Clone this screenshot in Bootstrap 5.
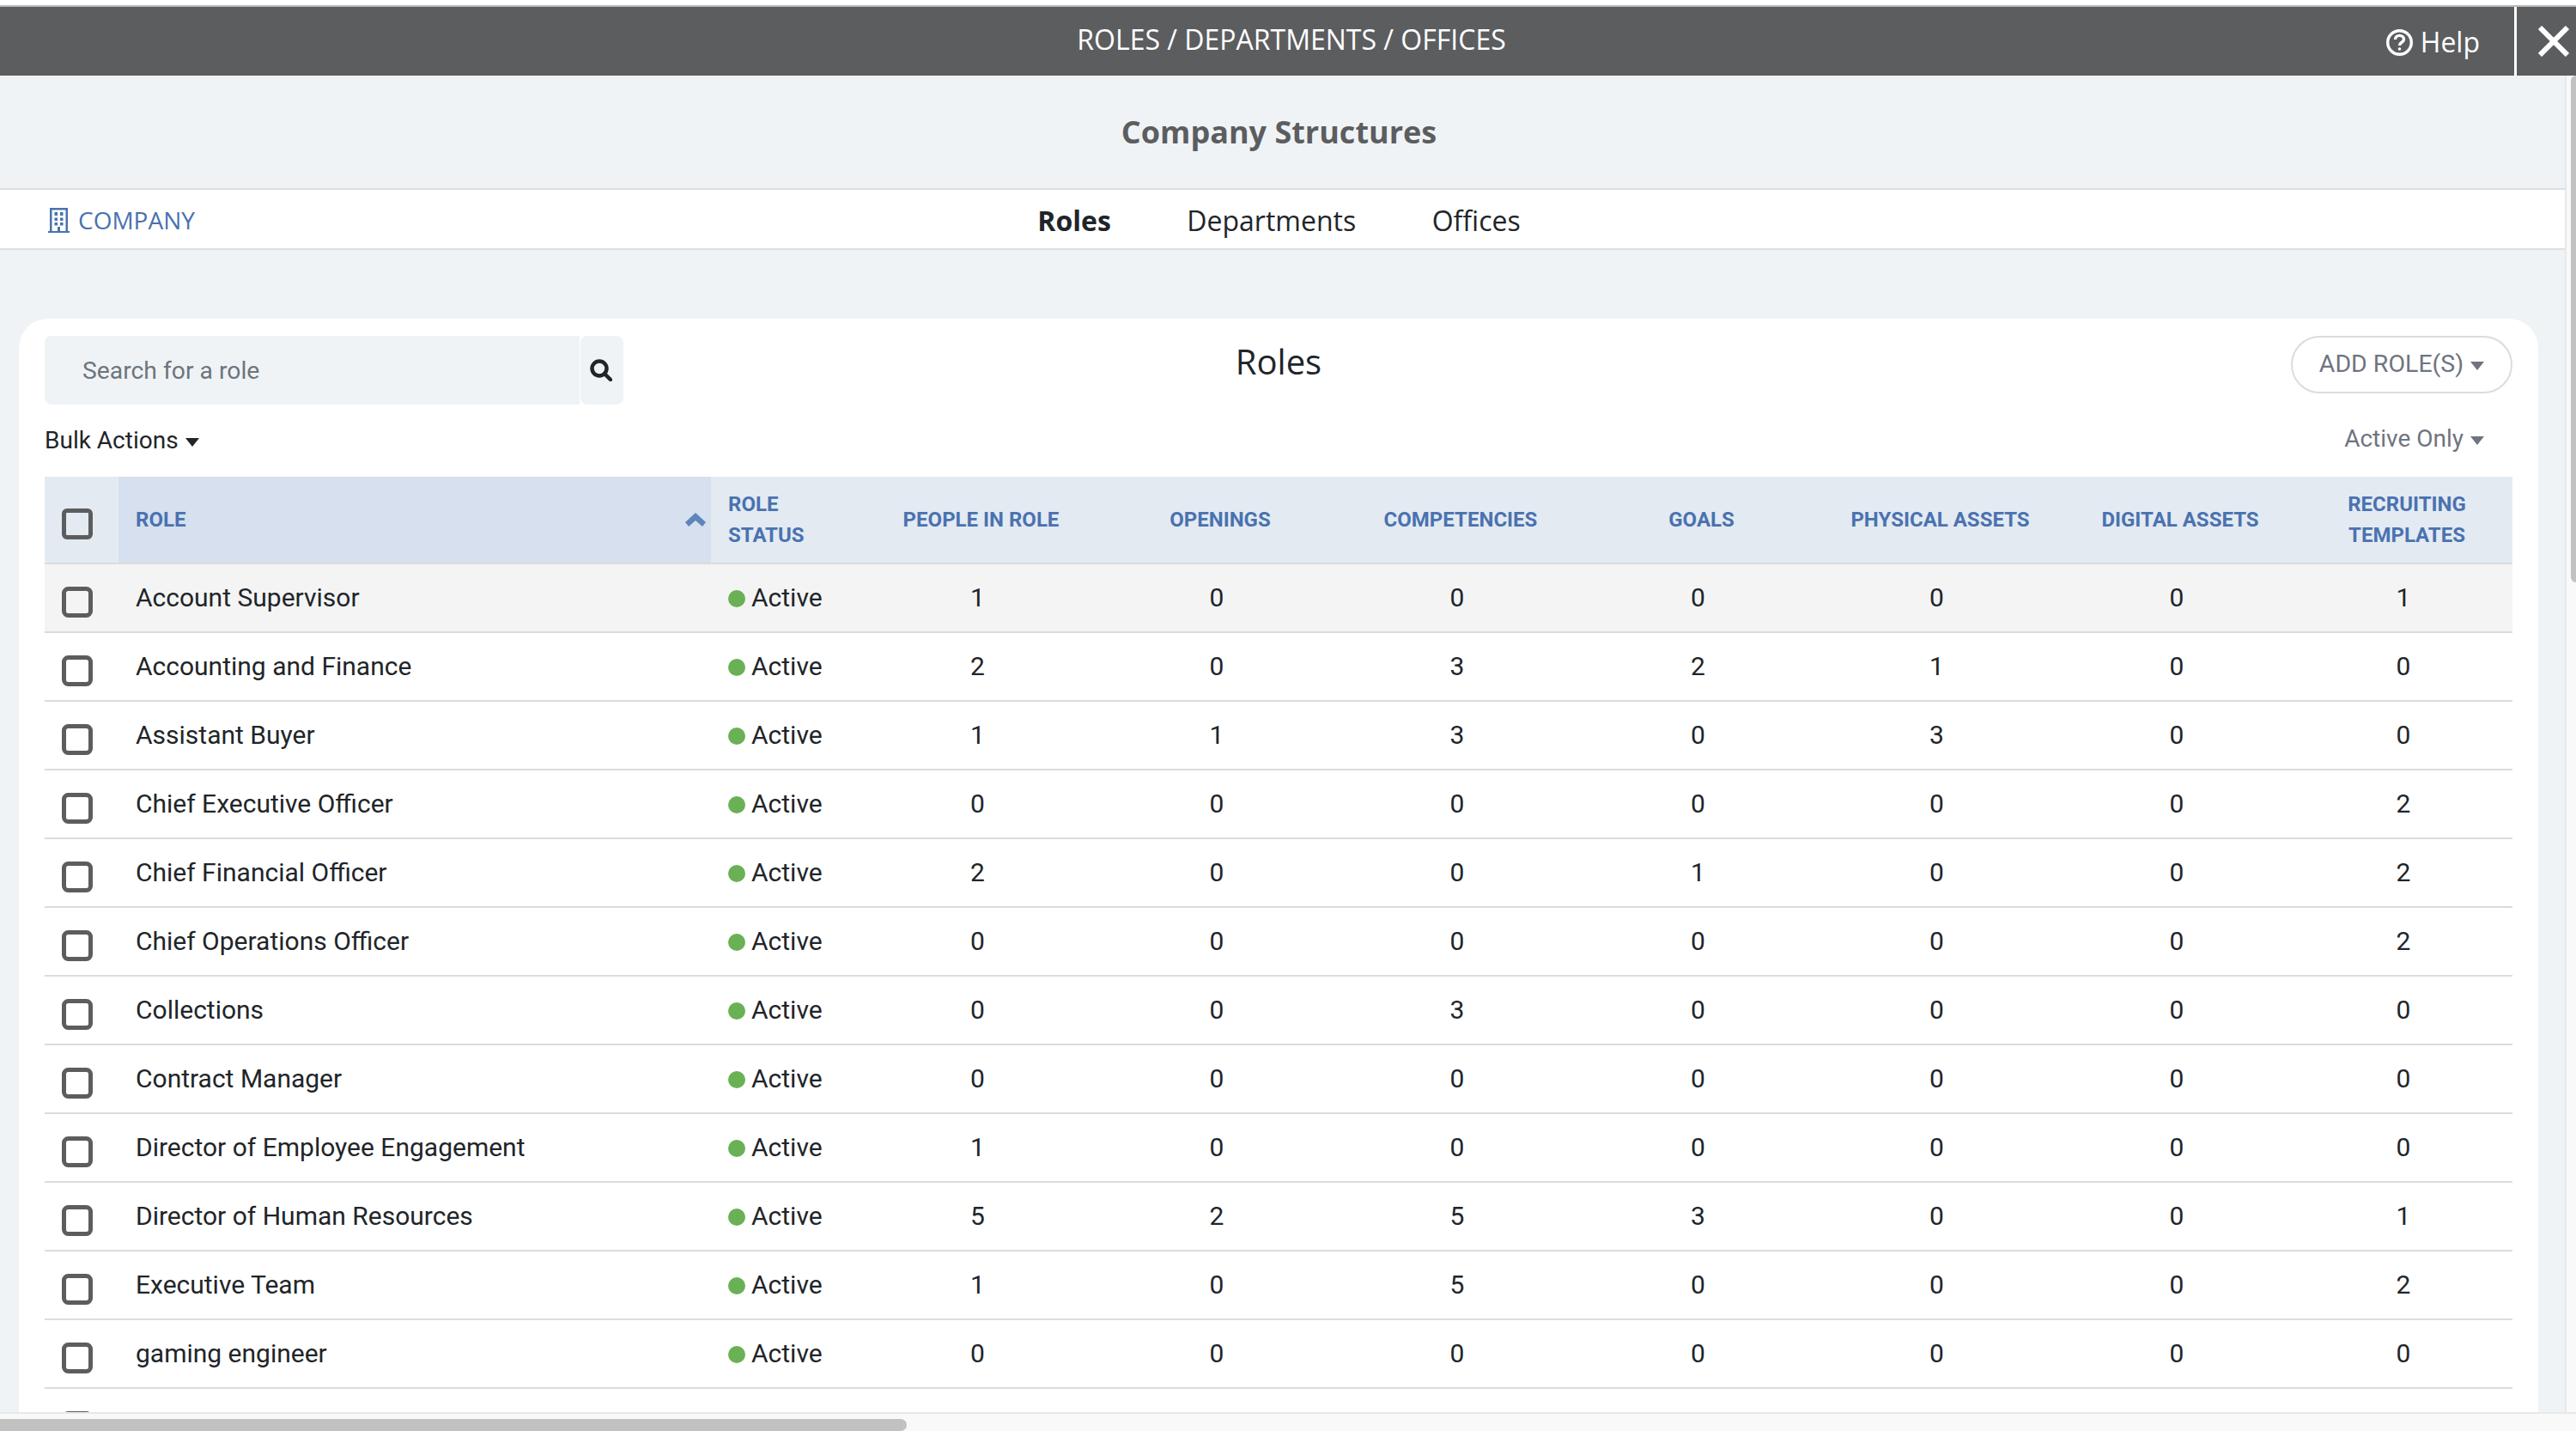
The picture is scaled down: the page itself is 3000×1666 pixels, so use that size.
<!DOCTYPE html>
<html lang="en">
<head>
<meta charset="utf-8">
<title>Roles / Departments / Offices</title>
<link href="https://cdn.jsdelivr.net/npm/bootstrap@5.3.0/dist/css/bootstrap.min.css" rel="stylesheet">
<script src="https://cdn.jsdelivr.net/npm/bootstrap@5.3.0/dist/js/bootstrap.bundle.min.js"></script>
<style>
html,body{height:100%;margin:0;overflow:hidden;background:#fff}
body{font-family:Roboto,"Liberation Sans",sans-serif;color:#212529}
.shell{height:1666px;width:3000px;padding-top:6px}
.topbar{height:82px;border-top:2px solid #b9b9b9;background:#5c5d5f;color:#fff;font-family:"Open Sans",sans-serif;display:grid;grid-template-columns:1fr auto 1fr;padding-left:8px}
.top-title{font-size:32px;line-height:1;margin-top:22px;font-weight:400}
.top-help{font-size:32px;line-height:1;margin-right:40px;gap:9px;padding-top:2px}
.top-close{width:72px;border-left:3px solid #fff;padding-left:25px}
.mid{height:1556px;overflow:hidden}
.mainpane{width:2987px;background:#eff3f6;overflow:hidden}
.vbar{width:13px;background:#f9f9f9;border-left:2px solid #e6e8ea;display:flex;justify-content:flex-end}
.vthumb{width:6px;height:590px;background:#c1c1c1;border-radius:8px 0 0 8px}
.hbar{height:22px;background:#f9f9f9;border-top:2px solid #e8e8e8;padding-top:6px}
.hthumb{width:1056px;height:14px;background:#c1c1c1;border-radius:0 8px 8px 0}
.page-head{height:131px;padding-right:8px;color:#5c5d5f;font-family:"Open Sans",sans-serif;font-size:36px;font-weight:700}
.tabbar{height:72px;background:#fff;border-top:2px solid #dcdee0;border-bottom:2px solid #dcdee0;display:grid;grid-template-columns:1fr auto 1fr;padding-right:8px;font-family:"Open Sans",sans-serif}
.co-link{color:#4a72b0;font-size:28px;padding-left:56px;padding-top:2px;gap:10px;text-decoration:none}
.tabset{gap:88.500px;font-size:32px;padding-top:4px}
.tabset .nav-link{padding:0;color:#212529}
.tabset .nav-link.active{font-weight:700;color:#212529}
.sheet{margin:80px 31px 0 22px;background:#fff;border:0;border-radius:34px 34px 0 0;padding:20px 30px 0}
.sheet-top{display:grid;grid-template-columns:1fr auto 1fr;align-items:start}
.searchbox{width:674px;height:80px}
.searchbox .form-control{background:#eff3f6;border:0;border-radius:8px;height:80px;padding:0 44px;font-size:28.300px;color:#212529;margin-right:1px}
.searchbox .form-control::placeholder{color:#6c757d}
.searchbox .input-group-text{background:#eff3f6;border:0;border-radius:8px!important;width:50px;padding:0 0 0 11px;margin-left:0!important}
.sheet-title{font-family:"Open Sans",sans-serif;font-size:40px;line-height:60px;margin:0;font-weight:400}
.addbtn{border:2px solid #dcdcdc;border-radius:34px;height:67px;width:258px;color:#6f7480;font-size:28.500px;padding:0;background:#fff}
.toolrow{height:84px}
.caret-down{display:inline-block;width:0;height:0;border-left:8px solid transparent;border-right:8px solid transparent;border-top:10px solid currentColor;margin-left:8px;vertical-align:middle}
.bulk{font-size:28px;color:#212529;padding:0;border:0}
.filter{font-size:28px;color:#6f7480;padding:0 33px 4px 0;border:0}
.roles-table{table-layout:fixed;width:2874px;margin:0;--bs-table-bg:transparent;--bs-table-border-color:#dcdcdc;font-size:30px}
.roles-table>thead>tr>th{--bs-table-bg:#e3eaf2;height:101px;padding:0 20px;vertical-align:middle;border-bottom-width:2px;color:#4a72b0;font-size:24px;line-height:36px;font-weight:700;text-transform:uppercase}
.roles-table>thead>tr>th.sorted{--bs-table-bg:#d6e0ee;position:relative}
.roles-table>tbody>tr>td{height:80px;padding:0 20px 1px;vertical-align:middle;border-bottom-width:2px}
.roles-table>tbody>tr.hovered>td{--bs-table-bg:#f4f4f4}
.roles-table>thead>tr>th.num{text-align:center;padding:0}
.roles-table>tbody>tr>td.num{text-align:center;padding:0 8px 1px 0}
.roles-table>thead>tr>th.pick,.roles-table>tbody>tr>td.pick{padding:0 0 0 20px}
.c-pick{width:86px}.c-role{width:690px}.c-status{width:175px}.c-a{width:279px}.c-b{width:278px}.c-c{width:282px}.c-d{width:279px}.c-e{width:277px}.c-f{width:282px}.c-g{width:246px}
.tick{width:36px;height:36px;margin:9px 0 0;display:block;border:5px solid #5c5d5f;border-radius:4px;background:transparent;float:none}
.sort-mark{position:absolute;right:6px;top:42px}
.live-dot{display:inline-block;width:20px;height:20px;border-radius:50%;background:#6ab155;margin-right:7px;vertical-align:-1px}
</style>
</head>
<body>
<div class="shell d-flex flex-column">
  <header class="topbar flex-shrink-0">
    <div></div>
    <div class="top-title">ROLES / DEPARTMENTS / OFFICES</div>
    <div class="d-flex justify-content-end align-items-center">
      <div class="top-help d-flex align-items-center">
        <svg width="31" height="31" viewBox="0 0 31 31" fill="none" stroke="#fff" stroke-width="3.400" aria-hidden="true"><circle cx="15.5" cy="15.5" r="13.800"/><path d="M10.500 12c0-3 2.200-4.600 5-4.600s5 1.700 5 4.200c0 2-1.200 3-2.700 3.900-1.400.9-2.300 1.600-2.300 3.500"/><circle cx="15.5" cy="23" r="1.100" fill="#fff" stroke-width="1.400"/></svg>
        <span>Help</span>
      </div>
      <div class="top-close align-self-stretch d-flex align-items-center">
        <svg width="36" height="36" viewBox="0 0 36 36" fill="none" stroke="#fff" stroke-width="6" aria-hidden="true"><path d="M2 2 34 34M34 2 2 34"/></svg>
      </div>
    </div>
  </header>
  <div class="mid d-flex flex-shrink-0">
    <main class="mainpane flex-shrink-0">
      <div class="page-head d-flex align-items-center justify-content-center">Company Structures</div>
      <div class="tabbar">
        <a class="co-link d-flex align-items-center" href="#">
          <svg width="25" height="29" viewBox="0 0 25 29" fill="#4a72b0" aria-hidden="true"><path fill-rule="evenodd" d="M2 0h21v27h2v2H0v-2h2zM4.500 2.500V27h16V2.500z"/><path d="M7.500 5h3.500v4H7.500zM14 5h3.500v4H14zM7.500 11.500h3.500v3.500H7.500zM14 11.500h3.500v3.500H14zM7.500 17h3.500v3.500H7.500zM14 17h3.500v3.500H14zM11 22h3v5h-3z"/></svg>
          COMPANY
        </a>
        <ul class="nav tabset align-items-center">
          <li class="nav-item"><a class="nav-link active" href="#">Roles</a></li>
          <li class="nav-item"><a class="nav-link" href="#">Departments</a></li>
          <li class="nav-item"><a class="nav-link" href="#">Offices</a></li>
        </ul>
        <div></div>
      </div>
      <section class="card sheet">
        <div class="sheet-top">
          <div class="input-group searchbox">
            <input class="form-control" type="text" placeholder="Search for a role" aria-label="Search for a role">
            <span class="input-group-text">
              <svg width="26" height="26" viewBox="0 0 26 26" fill="none" stroke="#212529" stroke-width="4.500" aria-hidden="true"><circle cx="11" cy="11" r="8.500"/><path d="M17 17l7 7" stroke-linecap="round"/></svg>
            </span>
          </div>
          <h2 class="sheet-title">Roles</h2>
          <div class="d-flex justify-content-end"><button class="btn addbtn" type="button">ADD ROLE(S)<span class="caret-down"></span></button></div>
        </div>
        <div class="toolrow d-flex justify-content-between align-items-center">
          <button class="btn bulk" type="button">Bulk Actions<span class="caret-down"></span></button>
          <button class="btn filter" type="button">Active Only<span class="caret-down"></span></button>
        </div>
        <table class="table roles-table">
          <colgroup><col class="c-pick"><col class="c-role"><col class="c-status"><col class="c-a"><col class="c-b"><col class="c-c"><col class="c-d"><col class="c-e"><col class="c-f"><col class="c-g"></colgroup>
          <thead>
            <tr>
              <th class="pick"><input class="form-check-input tick" type="checkbox" aria-label="Select all"></th>
              <th class="sorted">Role<svg class="sort-mark" width="24" height="16" viewBox="0 0 24 16" fill="#5f85bd" aria-hidden="true"><path d="M12 0 24 11l-4 5-8-7-8 7-4-5z"/></svg></th>
              <th>Role Status</th>
              <th class="num">People in Role</th>
              <th class="num">Openings</th>
              <th class="num">Competencies</th>
              <th class="num">Goals</th>
              <th class="num">Physical Assets</th>
              <th class="num">Digital Assets</th>
              <th class="num">Recruiting Templates</th>
            </tr>
          </thead>
          <tbody>
            <tr class="hovered"><td class="pick"><input class="form-check-input tick" type="checkbox"></td><td>Account Supervisor</td><td><span class="live-dot"></span>Active</td><td class="num">1</td><td class="num">0</td><td class="num">0</td><td class="num">0</td><td class="num">0</td><td class="num">0</td><td class="num">1</td></tr>
            <tr><td class="pick"><input class="form-check-input tick" type="checkbox"></td><td>Accounting and Finance</td><td><span class="live-dot"></span>Active</td><td class="num">2</td><td class="num">0</td><td class="num">3</td><td class="num">2</td><td class="num">1</td><td class="num">0</td><td class="num">0</td></tr>
            <tr><td class="pick"><input class="form-check-input tick" type="checkbox"></td><td>Assistant Buyer</td><td><span class="live-dot"></span>Active</td><td class="num">1</td><td class="num">1</td><td class="num">3</td><td class="num">0</td><td class="num">3</td><td class="num">0</td><td class="num">0</td></tr>
            <tr><td class="pick"><input class="form-check-input tick" type="checkbox"></td><td>Chief Executive Officer</td><td><span class="live-dot"></span>Active</td><td class="num">0</td><td class="num">0</td><td class="num">0</td><td class="num">0</td><td class="num">0</td><td class="num">0</td><td class="num">2</td></tr>
            <tr><td class="pick"><input class="form-check-input tick" type="checkbox"></td><td>Chief Financial Officer</td><td><span class="live-dot"></span>Active</td><td class="num">2</td><td class="num">0</td><td class="num">0</td><td class="num">1</td><td class="num">0</td><td class="num">0</td><td class="num">2</td></tr>
            <tr><td class="pick"><input class="form-check-input tick" type="checkbox"></td><td>Chief Operations Officer</td><td><span class="live-dot"></span>Active</td><td class="num">0</td><td class="num">0</td><td class="num">0</td><td class="num">0</td><td class="num">0</td><td class="num">0</td><td class="num">2</td></tr>
            <tr><td class="pick"><input class="form-check-input tick" type="checkbox"></td><td>Collections</td><td><span class="live-dot"></span>Active</td><td class="num">0</td><td class="num">0</td><td class="num">3</td><td class="num">0</td><td class="num">0</td><td class="num">0</td><td class="num">0</td></tr>
            <tr><td class="pick"><input class="form-check-input tick" type="checkbox"></td><td>Contract Manager</td><td><span class="live-dot"></span>Active</td><td class="num">0</td><td class="num">0</td><td class="num">0</td><td class="num">0</td><td class="num">0</td><td class="num">0</td><td class="num">0</td></tr>
            <tr><td class="pick"><input class="form-check-input tick" type="checkbox"></td><td>Director of Employee Engagement</td><td><span class="live-dot"></span>Active</td><td class="num">1</td><td class="num">0</td><td class="num">0</td><td class="num">0</td><td class="num">0</td><td class="num">0</td><td class="num">0</td></tr>
            <tr><td class="pick"><input class="form-check-input tick" type="checkbox"></td><td>Director of Human Resources</td><td><span class="live-dot"></span>Active</td><td class="num">5</td><td class="num">2</td><td class="num">5</td><td class="num">3</td><td class="num">0</td><td class="num">0</td><td class="num">1</td></tr>
            <tr><td class="pick"><input class="form-check-input tick" type="checkbox"></td><td>Executive Team</td><td><span class="live-dot"></span>Active</td><td class="num">1</td><td class="num">0</td><td class="num">5</td><td class="num">0</td><td class="num">0</td><td class="num">0</td><td class="num">2</td></tr>
            <tr><td class="pick"><input class="form-check-input tick" type="checkbox"></td><td>gaming engineer</td><td><span class="live-dot"></span>Active</td><td class="num">0</td><td class="num">0</td><td class="num">0</td><td class="num">0</td><td class="num">0</td><td class="num">0</td><td class="num">0</td></tr>
            <tr><td class="pick"><input class="form-check-input tick" type="checkbox"></td><td></td><td></td><td></td><td></td><td></td><td></td><td></td><td></td><td></td></tr>
          </tbody>
        </table>
      </section>
    </main>
    <aside class="vbar flex-shrink-0"><div class="vthumb"></div></aside>
  </div>
  <div class="hbar flex-shrink-0"><div class="hthumb"></div></div>
</div>
</body>
</html>
